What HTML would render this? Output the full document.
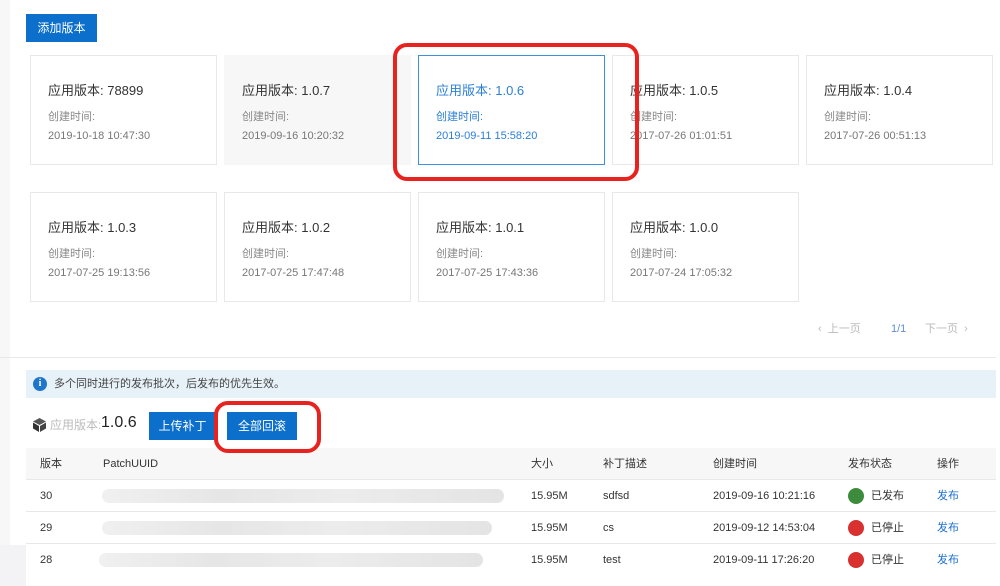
<!DOCTYPE html>
<html><head><meta charset="utf-8"><style>
*{margin:0;padding:0;box-sizing:border-box}
body{width:1000px;height:586px;overflow:hidden;background:#fff;font-family:"Liberation Sans","Noto Sans CJK SC",sans-serif;color:#333;position:relative}
.a{position:absolute}
.card{position:absolute;width:187px;height:110px;border:1px solid #e8e8e8;background:#fff}
.card .t{position:absolute;left:17px;top:26px;font-size:13px;line-height:18px;color:#333}
.card .l{position:absolute;left:17px;top:54px;font-size:11px;line-height:14px;color:#888}
.card .d{position:absolute;left:17px;top:73px;font-size:11px;line-height:14px;color:#777}
.btn{position:absolute;background:#0b6fcb;color:#fff;font-size:12px;text-align:center;line-height:28px;height:28px}
.row{position:absolute;left:26px;width:970px;height:32px;border-bottom:1px solid #e8e8e8;font-size:11px;color:#333}
.row span{position:absolute;top:0;line-height:32px;height:32px}
.blur{position:absolute;top:9px;height:14px;border-radius:7px;background:linear-gradient(90deg,#f0f0f0,#e6e6e6 30%,#ececec 60%,#e4e4e4)}
.dot{position:absolute;top:8px;width:16px;height:16px;border-radius:50%}
.red{position:absolute;border:4px solid #e8231f;border-radius:14px}
</style></head><body>
<div class="a" style="left:0;top:0;width:10px;height:586px;background:#f7f7f7"></div>
<div class="a" style="left:0;top:545px;width:26px;height:41px;background:#f3f3f6"></div>
<div class="btn" style="left:26px;top:14px;width:71px;height:28px">添加版本</div>

<div class="card" style="left:30px;top:55px"><div class="t">应用版本: 78899</div><div class="l">创建时间:</div><div class="d">2019-10-18 10:47:30</div></div>
<div class="card" style="left:224px;top:55px;background:#f7f7f7;border-color:#f7f7f7"><div class="t">应用版本: 1.0.7</div><div class="l">创建时间:</div><div class="d">2019-09-16 10:20:32</div></div>
<div class="card" style="left:418px;top:55px;border-color:#3d8fe0"><div class="t" style="color:#2b7fd6">应用版本: 1.0.6</div><div class="l" style="color:#2b7fd6">创建时间:</div><div class="d" style="color:#2b7fd6">2019-09-11 15:58:20</div></div>
<div class="card" style="left:612px;top:55px"><div class="t">应用版本: 1.0.5</div><div class="l">创建时间:</div><div class="d">2017-07-26 01:01:51</div></div>
<div class="card" style="left:806px;top:55px"><div class="t">应用版本: 1.0.4</div><div class="l">创建时间:</div><div class="d">2017-07-26 00:51:13</div></div>

<div class="card" style="left:30px;top:192px"><div class="t">应用版本: 1.0.3</div><div class="l">创建时间:</div><div class="d">2017-07-25 19:13:56</div></div>
<div class="card" style="left:224px;top:192px"><div class="t">应用版本: 1.0.2</div><div class="l">创建时间:</div><div class="d">2017-07-25 17:47:48</div></div>
<div class="card" style="left:418px;top:192px"><div class="t">应用版本: 1.0.1</div><div class="l">创建时间:</div><div class="d">2017-07-25 17:43:36</div></div>
<div class="card" style="left:612px;top:192px"><div class="t">应用版本: 1.0.0</div><div class="l">创建时间:</div><div class="d">2017-07-24 17:05:32</div></div>

<div class="red" style="left:393px;top:43px;width:246px;height:138px"></div>

<div class="a" style="left:818px;top:321px;font-size:11px;line-height:16px;color:#bbb">‹&nbsp; 上一页</div>
<div class="a" style="left:891px;top:321px;font-size:11px;line-height:16px;color:#5b8fd0">1/1</div>
<div class="a" style="left:925px;top:321px;font-size:11px;line-height:16px;color:#bbb">下一页 &nbsp;›</div>
<div class="a" style="left:0;top:357px;width:996px;height:1px;background:#e8e8e8"></div>

<div class="a" style="left:26px;top:370px;width:970px;height:28px;background:#e6f1f8"></div>
<div class="a" style="left:33px;top:377px;width:14px;height:14px;border-radius:50%;background:#1f76c8;color:#fff;font-size:10px;font-weight:bold;text-align:center;line-height:14px;font-family:'Liberation Serif',serif">i</div>
<div class="a" style="left:54px;top:376px;font-size:11px;line-height:16px;color:#444">多个同时进行的发布批次，后发布的优先生效。</div>

<svg class="a" style="left:32px;top:417px" width="15" height="16" viewBox="0 0 15 16"><path d="M7.5 1L14 4.5 7.5 8 1 4.5Z" fill="#555"/><path d="M1 5.5L7 9v6L1 11.5Z" fill="#333"/><path d="M14 5.5L8 9v6l6-3.5Z" fill="#444"/></svg>
<div class="a" style="left:50px;top:416px;font-size:12px;line-height:18px;color:#bbb">应用版本:</div>
<div class="a" style="left:101px;top:413px;font-size:16px;line-height:20px;color:#222">1.0.6</div>
<div class="btn" style="left:149px;top:412px;width:67px">上传补丁</div>
<div class="btn" style="left:227px;top:412px;width:70px">全部回滚</div>

<div class="row" style="top:448px;background:#f7f7f7;font-size:11px"><span style="left:14px">版本</span><span style="left:77px">PatchUUID</span><span style="left:505px">大小</span><span style="left:577px">补丁描述</span><span style="left:687px">创建时间</span><span style="left:822px">发布状态</span><span style="left:911px">操作</span></div>
<div class="row" style="top:480px"><span style="left:14px">30</span><div class="blur" style="left:76px;width:402px"></div><span style="left:505px">15.95M</span><span style="left:577px">sdfsd</span><span style="left:687px">2019-09-16 10:21:16</span><div class="dot" style="left:822px;background:#3d8c3d"></div><span style="left:845px">已发布</span><span style="left:911px;color:#1f6fd0">发布</span></div>
<div class="row" style="top:512px"><span style="left:14px">29</span><div class="blur" style="left:76px;width:390px"></div><span style="left:505px">15.95M</span><span style="left:577px">cs</span><span style="left:687px">2019-09-12 14:53:04</span><div class="dot" style="left:822px;background:#d93030"></div><span style="left:845px">已停止</span><span style="left:911px;color:#1f6fd0">发布</span></div>
<div class="row" style="top:544px;border-bottom:none"><span style="left:14px">28</span><div class="blur" style="left:73px;width:384px"></div><span style="left:505px">15.95M</span><span style="left:577px">test</span><span style="left:687px">2019-09-11 17:26:20</span><div class="dot" style="left:822px;background:#d93030"></div><span style="left:845px">已停止</span><span style="left:911px;color:#1f6fd0">发布</span></div>

<div class="red" style="left:214px;top:401px;width:107px;height:52px"></div>
</body></html>
